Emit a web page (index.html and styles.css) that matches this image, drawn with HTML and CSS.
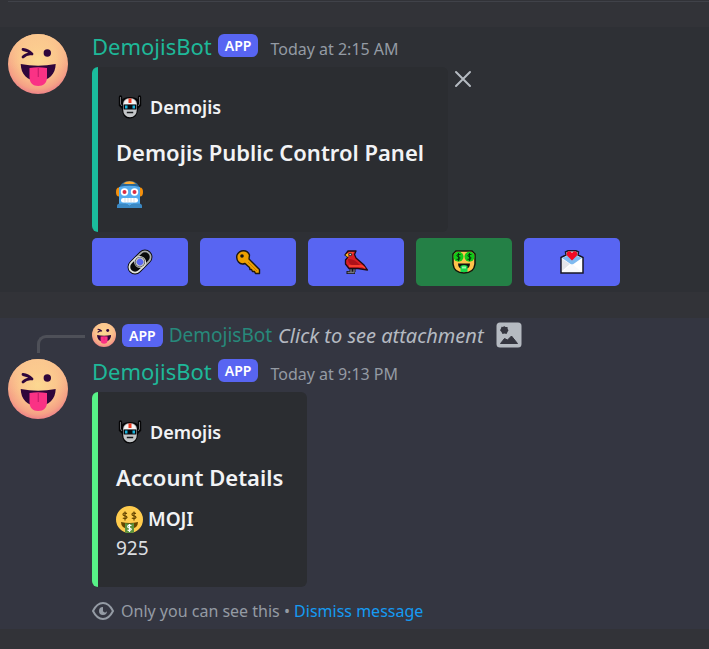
FILE: index.html
```html
<!DOCTYPE html>
<html lang="en">
<head>
<meta charset="utf-8">
<meta name="viewport" content="width=device-width, initial-scale=1">
<title>DemojisBot</title>
<link rel="stylesheet" href="styles.css">
</head>
<body>
<svg class="defs" aria-hidden="true">
  <defs>
    <radialGradient id="skin" cx="50%" cy="42%" r="62%">
      <stop offset="0" stop-color="#fcdc91"/>
      <stop offset=".5" stop-color="#fbc48c"/>
      <stop offset=".8" stop-color="#f5a286"/>
      <stop offset="1" stop-color="#ea7488"/>
    </radialGradient>
    <linearGradient id="skin-light" x1="0" y1="0" x2="0" y2="1">
      <stop offset="0" stop-color="#fbcb90" stop-opacity=".9"/>
      <stop offset=".6" stop-color="#fbcb90" stop-opacity="0"/>
    </linearGradient>
    <symbol id="face" viewBox="0 0 60 60">
      <circle cx="30" cy="30" r="30" fill="url(#skin)"/>
      <circle cx="30" cy="30" r="30" fill="url(#skin-light)"/>
      <path d="M15 15.500Q20 16 24 20Q19 19 15 23" fill="none" stroke="#2f063b" stroke-width="2.800" stroke-linecap="round" stroke-linejoin="round"/>
      <circle cx="39.300" cy="19" r="3.700" fill="#2f063b"/>
      <path d="M12.700 30Q30 33.500 47.700 30C47.500 40 41 47 30 47S13 40 12.700 30Z" fill="#2f063b"/>
      <path d="M21.500 34Q30 32.500 39 34V43C39 49 35.500 52 30.200 52S21.500 49 21.500 43Z" fill="#fa3285"/>
      <path d="M30.300 34V43" stroke="#c91d6c" stroke-width="1.200"/>
    </symbol>
    <symbol id="mech" viewBox="0 0 24 24">
      <path d="M2.500 2V10L5 12.500M21.500 2V10L19 12.500" fill="none" stroke="#050506" stroke-width="3.400" stroke-linecap="round"/>
      <path d="M4 4.500Q6 2 12 2T20 4.500V14Q19.500 23 12 23.500T4 14Z" fill="#050506"/>
      <path d="M2.500 2V9L4 11M21.500 2V9L20 11" fill="none" stroke="#6f7276" stroke-width="1"/>
      <path d="M5 9Q5.500 3.200 12 3.200T19 9V14Q18.500 22.200 12 22.200T5 14Z" fill="#c4c6c8"/>
      <path d="M6 9Q6.500 4 12 4T18 9Z" fill="#f4f4f4"/>
      <path d="M10.500 3.500H13.500V8H10.500Z" fill="#f13b20"/>
      <path d="M5.500 9.500H18.500V14.500H5.500Z" fill="#08090c"/>
      <path d="M7 10.500H9.500V13.500H7ZM14.500 10.500H17V13.500H14.500Z" fill="#18b6df"/>
      <path d="M8.800 17.500H15.200" stroke="#17191c" stroke-width="1.500"/>
    </symbol>
  </defs>
</svg>

<main class="chat">
  <hr class="divider">

  <article class="message message-hover">
    <svg class="avatar" role="img" aria-label="DemojisBot avatar"><use href="#face"/></svg>
    <div class="content">
      <header class="byline">
        <span class="name">DemojisBot</span><span class="tag">APP</span><time class="time">Today at 2:15 AM</time>
      </header>
      <div class="embed-row">
        <section class="embed embed-teal">
          <div class="author"><svg class="author-icon" aria-hidden="true"><use href="#mech"/></svg><span>Demojis</span></div>
          <h2 class="title">Demojis Public Control Panel</h2>
          <div class="emoji-line">
            <svg class="emoji" viewBox="0 0 27 27" role="img" aria-label="Robot">
              <ellipse cx="3" cy="11" rx="3" ry="4.500" fill="#f4900c"/><ellipse cx="24" cy="11" rx="3" ry="4.500" fill="#f4900c"/>
              <path d="M3 9Q4 0 13.500 0T24 9Z" fill="#2a6797"/>
              <path d="M7 2.500Q13.500-2 20 2.500L17 3H10Z" fill="#ffac33"/>
              <path d="M3 6Q13.500 3.500 24 6V23H3Z" fill="#55acee"/>
              <path d="M1 25Q1 22.500 4 22.500H10.500L13.500 25L16.500 22.500H23Q26 22.500 26 25V27H1Z" fill="#3b88c3"/>
              <path d="M9.500 22H17.500L13.500 25Z" fill="#55acee"/>
              <circle cx="8.500" cy="11" r="3.700" fill="#fff"/><circle cx="18.500" cy="11" r="3.700" fill="#fff"/>
              <circle cx="8.500" cy="11" r="2" fill="#dd2e44"/><circle cx="18.500" cy="11" r="2" fill="#dd2e44"/>
              <rect x="5" y="17" width="17" height="4.500" rx="2.200" fill="#fff"/>
              <path d="M9 17V21.500M12 17V21.500M15 17V21.500M18 17V21.500" stroke="#c8d3da" stroke-width=".7"/>
            </svg>
          </div>
        </section>
        <button class="close" type="button" aria-label="Remove embed">
          <svg viewBox="0 0 18 18"><path d="M2 2L16 16M16 2L2 16" stroke="#b5bac1" stroke-width="2" stroke-linecap="round"/></svg>
        </button>
      </div>
      <div class="actions">
        <button class="action" type="button" aria-label="Link">
          <svg viewBox="0 0 24 24" fill="none"><g transform="rotate(-45 12 12)">
            <rect x="-2.500" y="4.500" width="29" height="15" rx="7.500" fill="#09090b"/>
            <rect x="7" y="6.300" width="17.700" height="11.400" rx="5.700" stroke="#a9abab" stroke-width="1.800"/>
            <rect x="-.7" y="6.300" width="17.700" height="11.400" rx="5.700" stroke="#e1e3dc" stroke-width="1.800"/>
            <circle cx="12" cy="12" r="5" fill="#09090b"/>
            <circle cx="12" cy="12" r="4" fill="#5865f2" stroke="#c9cbc8" stroke-width="1.300"/>
          </g></svg>
        </button>
        <button class="action" type="button" aria-label="Key">
          <svg viewBox="0 0 24 24"><path d="M13 9L23.500 19.500V23.500H19.500L18.500 21.500H16.500L15.500 19.500H14L13.500 17.500L9 13.500Q5 15 2.500 12T1 5Q3 .7 7.500 .7T13.500 5Z" fill="#eea000" stroke="#1d1710" stroke-width="1.400" stroke-linejoin="round"/><circle cx="6" cy="6" r="1.800" fill="#17130f"/><path d="M12 12L21 21" stroke="#c77c00"/></svg>
        </button>
        <button class="action" type="button" aria-label="Bird">
          <svg viewBox="0 0 24 24"><path d="M7 18V22M10 18V22M2.500 22.500H11" stroke="#15151b" stroke-width="3"/><path d="M7 18V22M10 18V22M3.500 22.500H10.500" stroke="#777780" stroke-width="1.300"/><path d="M4 1H12L10.500 4.500L12 8L20 15L23.500 20L14 18.500H5L1.500 14V10L4 7L1 5Z" fill="#d91d25" stroke="#200b11" stroke-width="1.300" stroke-linejoin="round"/><path d="M5 2H10L8.500 4H4Z" fill="#f44831"/><path d="M4 3L1.300 5L4.500 7.500Z" fill="#ffc51b"/><circle cx="6.200" cy="4.500" r="1.800" fill="#333"/><circle cx="6.200" cy="4.500" r=".8" fill="#ddd"/><path d="M4 9Q10 8 16 15H8Q4 14 4 9Z" fill="#ae1119"/><path d="M5 16H18L21 18" fill="none" stroke="#ff4930" stroke-width="1.500"/></svg>
        </button>
        <button class="action action-green" type="button" aria-label="Money face">
          <svg viewBox="0 0 24 24"><path d="M4 1H20L23 4V14Q22 23 12 23T1 14V4Z" fill="#ffc34b" stroke="#11150b" stroke-width="1.500"/><circle cx="6.500" cy="6.800" r="5" fill="#12c918"/><circle cx="17.500" cy="6.800" r="5" fill="#12c918"/><path d="M8.500 4.500H5.500L4.800 6L8 7.500L7.500 9.300H4.500M6.500 3V11M19.500 4.500H16.500L15.800 6L19 7.500L18.500 9.300H15.500M17.500 3V11" fill="none" stroke="#072e09" stroke-width=".9"/><path d="M6 13.500H18Q18 19 12 19T6 13.500Z" fill="#11130d"/><path d="M8.500 16Q12 14 15.500 16V22H8.500Z" fill="#18d84a"/><path d="M10 16.500H14V18.500H10Z" fill="#9bf9a6"/></svg>
        </button>
        <button class="action" type="button" aria-label="Love letter">
          <svg viewBox="0 0 24 24"><path d="M1 7.500L6 5L5.500 2L8 .8H16L18.500 2L18 5L23 7.500V23H1Z" fill="#fff" stroke="#171725" stroke-width="1.500"/><path d="M2 8L7 6H17L22 8L12 15Z" fill="#7fbaf0"/><path d="M2 9L10 14L2 21Z" fill="#e3e5eb"/><path d="M2 22L12 14L22 22Z" fill="#f8f9fb"/><path d="M12 10.500L7 5.500Q6 3 8 1.500Q10.500 .5 12 3Q13.500 .5 16 1.500Q18 3 17 5.500Z" fill="#f10b25"/></svg>
        </button>
      </div>
    </div>
  </article>

  <article class="message message-private">
    <div class="spine"></div>
    <div class="reply">
      <svg class="reply-avatar" role="img" aria-label="DemojisBot avatar"><use href="#face"/></svg>
      <span class="tag">APP</span>
      <span class="reply-name">DemojisBot</span>
      <em class="reply-text">Click to see attachment</em>
      <svg class="reply-image" viewBox="0 0 26 26" aria-hidden="true"><rect x=".5" y=".5" width="25" height="25" rx="3.500" fill="#b5bac1"/><path d="M8 4L9.500 5L11.500 5L11.700 7L12.500 8.300L11.500 10L10.500 12L8.500 11.500L6.500 12L5.500 10L4 8.300L5 6.500L5.500 4.700L7.200 5Z" fill="#34353f"/><path d="M4.500 21.500L8.500 16.500L11.500 18L15.500 14L21.500 21.500Z" fill="#34353f" stroke="#34353f" stroke-linejoin="round"/></svg>
    </div>
    <svg class="avatar" role="img" aria-label="DemojisBot avatar"><use href="#face"/></svg>
    <div class="content">
      <header class="byline">
        <span class="name">DemojisBot</span><span class="tag">APP</span><time class="time">Today at 9:13 PM</time>
      </header>
      <section class="embed embed-green">
        <div class="author"><svg class="author-icon" aria-hidden="true"><use href="#mech"/></svg><span>Demojis</span></div>
        <h2 class="title">Account Details</h2>
        <div class="field-name">
          <svg class="emoji" viewBox="0 0 27 27" role="img" aria-label="Money face"><circle cx="13.500" cy="13.500" r="13.500" fill="#ffcc4d"/><path d="M5 16Q13.500 18 22 16Q22 23 13.500 23T5 16Z" fill="#664500"/><path d="M9 17Q13.500 18.500 18 17V26.300Q13.500 28 9 26.300Z" fill="#5c913b"/><path d="M11 7.500Q7 6 7 8.500C7 10.500 11 9 11 11.500Q10 13.500 6.800 12M9 5.500V14.500M20 7.500Q16 6 16 8.500C16 10.500 20 9 20 11.500Q19 13.500 15.800 12M18 5.500V14.500" fill="none" stroke="#664500" stroke-width="1.200"/><path d="M15.500 19.500Q11.500 18.500 11.700 21C12 22.500 15.500 21.500 15.300 23.500Q14 25.200 11.500 24M13.500 18V26" fill="none" stroke="#fff" stroke-width="1.200"/></svg>
          <span>MOJI</span>
        </div>
        <div class="field-value">925</div>
      </section>
      <footer class="notice">
        <svg class="eye" viewBox="0 0 22 18" aria-hidden="true"><path d="M1 9Q5 1 11 1T21 9Q17 17 11 17T1 9Z" fill="none" stroke="#949ba4" stroke-width="2"/><path d="M11 5A4 4 0 1 0 15 9A2 2 0 0 1 11 7.500Z" fill="#949ba4"/></svg>
        <span>Only you can see this • <a class="dismiss" href="#">Dismiss message</a></span>
      </footer>
    </div>
  </article>
</main>
</body>
</html>
```
FILE: styles.css
```css
* {
  box-sizing: border-box;
}

body {
  margin: 0;
  background: #323338;
  color: #dbdee1;
  font-family: "Noto Sans", "Open Sans", sans-serif;
  font-size: 18px;
}

.defs {
  position: absolute;
  width: 0;
  height: 0;
}

svg {
  display: block;
  flex: none;
}

.divider {
  height: 1px;
  margin: 1px 0 25px 8px;
  border: 0;
  background: #404249;
}

.message {
  display: grid;
  grid-template-columns: 60px minmax(0, 1fr);
  column-gap: 24px;
  padding: 7px 8px 6px;
}

.message-hover {
  background: #2e3035;
}

.message-private {
  margin-top: 26px;
  padding: 5px 8px 0;
  background: #343641;
}

.avatar {
  width: 60px;
  height: 60px;
}

.byline {
  display: flex;
  align-items: center;
  height: 33px;
  padding-bottom: 8px;
}

.name {
  color: #1eb899;
  font-size: 22px;
  line-height: 25px;
}

.tag {
  margin-left: 6px;
  padding: 0 7px;
  border-radius: 6px;
  background: #5865f2;
  color: #fff;
  font-size: 14px;
  font-weight: 600;
  line-height: 23px;
}

.byline .tag {
  margin-bottom: 2px;
}

.time {
  margin-left: 12px;
  padding-top: 4px;
  color: #949ba4;
  font-size: 16px;
  line-height: 24px;
}

.embed-row {
  display: flex;
  align-items: flex-start;
  gap: 6px;
}

.embed {
  width: fit-content;
  padding: 22px 24px 24px 18px;
  border-left: 6px solid;
  border-radius: 6px;
  background: #2b2d31;
}

.embed-teal {
  border-color: #1abc9c;
}

.embed-green {
  border-color: #57f287;
}

.author {
  display: flex;
  align-items: center;
  gap: 8px;
  height: 36px;
  padding-left: 2px;
  color: #f2f3f5;
  font-weight: 600;
}

.author-icon {
  width: 24px;
  height: 24px;
}

.title {
  margin: 12px 0 0;
  color: #f2f3f5;
  font-size: 22px;
  font-weight: 600;
  line-height: 30px;
}

.emoji-line {
  padding-top: 14px;
}

.emoji {
  width: 27px;
  height: 27px;
}

.close {
  padding: 3px 0;
  border: 0;
  background: none;
}

.close svg {
  width: 18px;
  height: 18px;
}

.actions {
  display: flex;
  flex-wrap: wrap;
  gap: 12px;
  margin-top: 6px;
}

.action {
  display: flex;
  align-items: center;
  justify-content: center;
  width: 96px;
  height: 48px;
  padding: 0;
  border: 0;
  border-radius: 5px;
  background: #5865f2;
}

.action-green {
  background: #248046;
}

.action svg {
  width: 24px;
  height: 24px;
  overflow: visible;
}

.spine {
  width: 48px;
  height: 18px;
  margin: 12px 0 6px 29px;
  border-top: 3px solid #4e5058;
  border-left: 3px solid #4e5058;
  border-top-left-radius: 9px;
}

.reply {
  display: flex;
  align-items: center;
  gap: 6px;
  height: 24px;
}

.reply .tag {
  margin-left: 0;
}

.reply-avatar {
  width: 24px;
  height: 24px;
}

.reply-name {
  color: #27897b;
  font-size: 19px;
}

.reply-text {
  color: #b5bac1;
  font-size: 20px;
}

.reply-image {
  width: 26px;
  height: 26px;
  margin-left: 6px;
}

.field-name {
  display: flex;
  align-items: center;
  gap: 5px;
  margin-top: 12px;
  color: #f2f3f5;
  font-size: 19px;
  font-weight: 600;
  line-height: 30px;
}

.field-value {
  font-size: 19px;
  line-height: 29px;
}

.notice {
  display: flex;
  align-items: center;
  gap: 7px;
  height: 36px;
  margin-top: 6px;
  color: #949ba4;
  font-size: 16px;
}

.eye {
  width: 22px;
  height: 18px;
}

.dismiss {
  color: #159bf3;
  text-decoration: none;
}
```
